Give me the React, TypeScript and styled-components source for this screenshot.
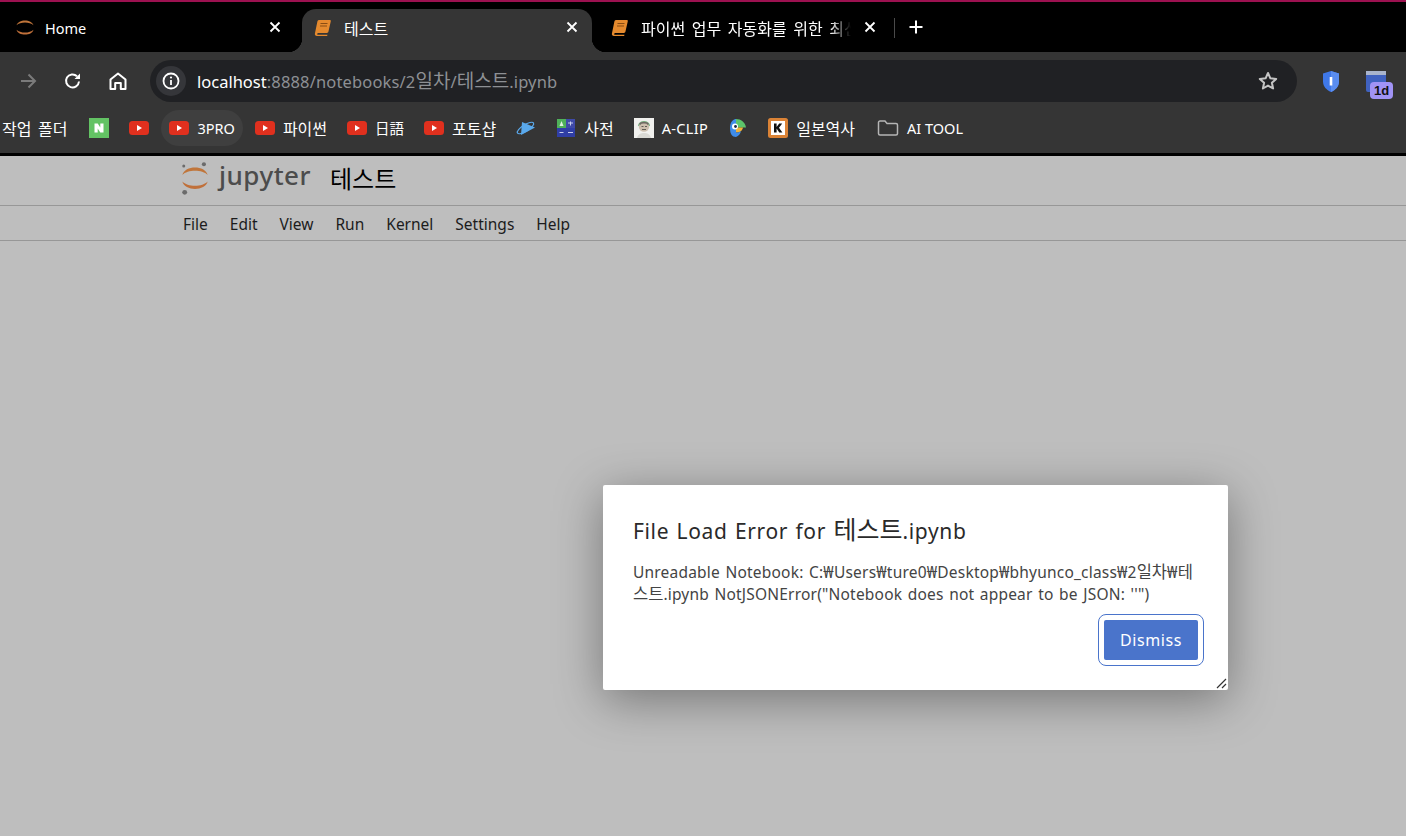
import styled, { createGlobalStyle } from 'styled-components';

const UI_FONT = '"Noto Sans", "Noto Sans CJK KR", sans-serif';

const GlobalStyle = createGlobalStyle`
  html, body {
    margin: 0;
    padding: 0;
    background: #bebebe;
  }
  body {
    font-family: ${UI_FONT};
    overflow: hidden;
  }
`;

const Screen = styled.div`
  position: relative;
  width: 1406px;
  height: 836px;
  overflow: hidden;
  background: #bebebe;
`;

// hangul runs a size larger than the latin text around them
const Ko = styled.span<{ $size?: number }>`
  font-family: "Noto Sans CJK KR", sans-serif;
  font-size: ${(p) => p.$size ?? 16}px;
  letter-spacing: 0;
`;

const TabStrip = styled.div`
  display: flex;
  align-items: flex-end;
  height: 50px;
  background: #000;
  border-top: 2px solid #9c1150;
`;

const Tab = styled.div<{ $active?: boolean; $width: number; $pad: number; $padRight: number }>`
  position: relative;
  display: flex;
  align-items: center;
  flex: none;
  box-sizing: border-box;
  width: ${(p) => p.$width}px;
  height: 43px;
  padding: 0 ${(p) => p.$padRight}px 6px ${(p) => p.$pad}px;
  color: #fff;
  font-size: 14.5px;
  background: ${(p) => (p.$active ? '#353535' : 'transparent')};
  border-radius: ${(p) => (p.$active ? '14px 14px 0 0' : '0')};

  ${(p) =>
    p.$active &&
    `
    &::before, &::after {
      content: '';
      position: absolute;
      bottom: 0;
      width: 14px;
      height: 14px;
    }
    &::before {
      left: -14px;
      background: radial-gradient(circle at 0 0, transparent 14px, #353535 14.5px);
    }
    &::after {
      right: -14px;
      background: radial-gradient(circle at 100% 0, transparent 14px, #353535 14.5px);
    }
  `}
`;

const TabIcon = styled.span`
  display: flex;
  flex: none;
  width: 20px;
  margin-right: 10px;
`;

const TabTitle = styled.span<{ $fade?: boolean }>`
  flex: 1;
  min-width: 0;
  overflow: hidden;
  white-space: nowrap;
  ${(p) =>
    p.$fade &&
    `
    margin-right: 11px;
    word-spacing: 3px;
    -webkit-mask-image: linear-gradient(to right, #000 90%, transparent 100%);
    mask-image: linear-gradient(to right, #000 90%, transparent 100%);
  `}
`;

const TabClose = styled.span`
  display: flex;
  flex: none;
  align-items: center;
  justify-content: center;
  width: 16px;
  height: 16px;
  margin-bottom: 2px;
`;

const TabDivider = styled.div`
  width: 1px;
  height: 20px;
  margin: 0 0 14px 10px;
  background: #4a4a4a;
`;

const NewTab = styled.div`
  display: flex;
  margin: 0 0 17px 13px;
`;

const Toolbar = styled.div`
  display: flex;
  align-items: center;
  height: 58px;
  padding: 0 2px 0 5px;
  box-sizing: border-box;
  background: #353535;
`;

const NavButton = styled.div`
  display: flex;
  flex: none;
  align-items: center;
  justify-content: center;
  width: 45px;
  height: 42px;
`;

const AddressBar = styled.div`
  display: flex;
  flex: 1;
  align-items: center;
  height: 42px;
  margin: 0 9px 0 10px;
  padding: 0 18px 0 6px;
  border-radius: 21px;
  background: #202124;
`;

const InfoBadge = styled.div`
  display: flex;
  flex: none;
  align-items: center;
  justify-content: center;
  width: 30px;
  height: 30px;
  margin-right: 11px;
  border-radius: 50%;
  background: #35363a;
`;

const Url = styled.div`
  flex: 1;
  padding-bottom: 4px;
  font-size: 16.5px;
  letter-spacing: 0.15px;
  color: #8d9094;
  white-space: nowrap;
`;

const UrlHost = styled.span`
  color: #fff;
  letter-spacing: 0;
`;

const ExtButton = styled.div`
  position: relative;
  display: flex;
  flex: none;
  align-items: center;
  justify-content: center;
  width: 49px;
  height: 42px;
`;

const ExtBadge = styled.div`
  position: absolute;
  top: 22px;
  left: 15px;
  width: 23px;
  height: 17px;
  border-radius: 4px;
  background: #a193f5;
  color: #111;
  font: 700 13px/17px "Liberation Sans", sans-serif;
  text-align: center;
`;

const BookmarkBar = styled.div`
  display: flex;
  align-items: center;
  gap: 4px;
  height: 46px;
  box-sizing: border-box;
  padding-bottom: 8px;
  background: #353535;
  border-bottom: 3px solid #000;
`;

const Bookmark = styled.div<{ $hover?: boolean; $plain?: boolean }>`
  display: flex;
  align-items: center;
  gap: 8px;
  flex: none;
  height: 36px;
  padding: 0 ${(p) => (p.$plain ? 10 : 8)}px 0 ${(p) => (p.$plain ? 2 : 8)}px;
  border-radius: 18px;
  font-size: 14.5px;
  word-spacing: 3px;
  color: #fff;
  white-space: nowrap;
  background: ${(p) => (p.$hover ? '#3f3f3f' : 'transparent')};
`;

const SpacedLabel = styled.span`
  letter-spacing: 0.35px;
`;

const ToolLabel = styled.span`
  word-spacing: 0;
`;

const HeaderRow = styled.div`
  display: flex;
  align-items: center;
  box-sizing: border-box;
  height: 50px;
  padding: 0 0 5px 180px;
  border-bottom: 1px solid #979797;
`;

const LogoWord = styled.span`
  position: relative;
  top: -3px;
  margin-left: 9px;
  font-family: "Noto Sans", sans-serif;
  font-size: 26px;
  font-weight: 500;
  line-height: 1;
  letter-spacing: 0.5px;
  color: #4c4c4c;
`;

const NotebookTitle = styled.span`
  margin: 0 0 2px 19px;
  font-size: 24px;
  color: #000;
`;

const MenuRow = styled.div`
  display: flex;
  align-items: center;
  gap: 22px;
  height: 35px;
  box-sizing: border-box;
  padding: 2px 0 0 183px;
  border-bottom: 1px solid #979797;
  font-size: 15.5px;
  color: #1c1c1c;
`;

const Dialog = styled.div`
  position: absolute;
  top: 485px;
  left: 603px;
  box-sizing: border-box;
  width: 625px;
  height: 205px;
  padding: 27px 24px 0 30px;
  border-radius: 2px;
  background: #fff;
  box-shadow: 0 10px 48px rgba(0, 0, 0, 0.38);
`;

const DialogTitle = styled.div`
  font-size: 21px;
  line-height: 32px;
  letter-spacing: 0.65px;
  word-spacing: 1.25px;
  color: #2a2a2a;
`;

const DialogBody = styled.div`
  margin-top: 14px;
  font-size: 15.5px;
  line-height: 21px;
  letter-spacing: 0.2px;
  word-spacing: 1.3px;
  color: #444;
  white-space: nowrap;
`;

const DialogActions = styled.div`
  display: flex;
  justify-content: flex-end;
  margin-top: 9px;
`;

const FocusRing = styled.div`
  padding: 5px;
  border: 1px solid #4a74cb;
  border-radius: 8px;
`;

const DismissButton = styled.button`
  display: block;
  width: 94px;
  height: 40px;
  padding: 0;
  border: none;
  border-radius: 2px;
  background: #4a74cb;
  color: #fff;
  font-family: ${UI_FONT};
  font-size: 16px;
  letter-spacing: 0.6px;
`;

const ResizeGrip = styled.svg`
  position: absolute;
  right: 1px;
  bottom: 1px;
`;

const CloseIcon = () => (
  <svg width="12" height="12" viewBox="0 0 12 12">
    <path d="M1.5 1.5l9 9M10.5 1.5l-9 9" stroke="#fff" strokeWidth="1.8" />
  </svg>
);

const NotebookIcon = () => (
  <svg width="18" height="18" viewBox="0 0 18 18">
    <path
      d="M5.2 1h10.6c.7 0 1.1.6 1 1.2l-2.4 10.6c-.2.7-.7 1.2-1.4 1.2H4.5c-.8 0-1.2.5-1.3 1-.1.4.2.8.8.8h9.4l-.2 1.2H3c-1.5 0-2.4-1-2.1-2.4L3.4 2.4C3.6 1.6 4.4 1 5.2 1z"
      fill="#e58a2e"
    />
    <path d="M6.5 4.5h7M6 7h7" stroke="#8a4c12" strokeWidth="1" />
  </svg>
);

const JupyterMark = ({ size, dots }: { size: number; dots?: boolean }) => (
  <svg width={size} height={size * 1.15} viewBox="0 0 32 36">
    <path d="M2.5 14.5C5 4 27 4 29.5 14.5C24 8.5 8 8.5 2.5 14.5Z" fill="#c0753a" />
    <path d="M2.5 21.5C5 32 27 32 29.5 21.5C24 27.5 8 27.5 2.5 21.5Z" fill="#c0703a" />
    {dots && (
      <>
        <circle cx="25.5" cy="3" r="2.2" fill="#6b6b6b" />
        <circle cx="4" cy="5" r="1.6" fill="#6b6b6b" />
        <circle cx="5" cy="33" r="2.6" fill="#6b6b6b" />
      </>
    )}
  </svg>
);

const YoutubeIcon = () => (
  <svg width="20" height="14" viewBox="0 0 20 14">
    <rect width="20" height="14" rx="3.5" fill="#e0301e" />
    <path d="M8 4l5 3-5 3z" fill="#fff" />
  </svg>
);

const NaverIcon = () => (
  <svg width="20" height="20" viewBox="0 0 20 20">
    <rect width="20" height="20" fill="#63c364" />
    <path d="M5.5 5.5h3.2l2.6 3.9V5.5h3.2v9h-3.2L8.7 10.6v3.9H5.5z" fill="#fff" />
  </svg>
);

const OrbitIcon = () => (
  <svg width="20" height="20" viewBox="0 0 20 20">
    <path d="M6 4l13 5.5L5 17z" fill="#5aa9ec" />
    <ellipse
      cx="9.5"
      cy="10"
      rx="9.5"
      ry="3.2"
      transform="rotate(-32 9.5 10)"
      stroke="#5aa9ec"
      strokeWidth="1.2"
      fill="none"
    />
  </svg>
);

const DictIcon = () => (
  <svg width="20" height="20" viewBox="-1 -1 20 20">
    <rect x="0" y="0" width="9" height="9" fill="#4fb05a" />
    <rect x="9" y="0" width="9" height="9" fill="#3f4aa8" />
    <rect x="0" y="9" width="18" height="9" fill="#2f3ea6" />
    <path d="M4.5 2l2 5h-4z" fill="#dff2e0" />
    <path d="M11 4h5M13.5 2.5v4M2.5 13.5h4M11 13.5h5" stroke="#c9cfee" strokeWidth="1" />
  </svg>
);

const AvatarIcon = () => (
  <svg width="20" height="20" viewBox="0 0 20 20">
    <rect width="20" height="20" fill="#f1f1ee" />
    <circle cx="10" cy="8.5" r="5.2" fill="#cdbfae" />
    <path d="M4.5 8C4.5 2 15.5 2 15.5 8" stroke="#7fb98a" strokeWidth="1.2" fill="none" />
    <path d="M5.5 6.5C7 4 13 4 14.5 6.5" stroke="#6f6a64" strokeWidth="1.6" fill="none" />
    <path d="M7.5 8.5h2M11 8.5h2M8 11.5h4" stroke="#57524c" strokeWidth="0.9" />
    <path d="M3 20c1-4 4-5 7-5s6 1 7 5z" fill="#d9d9d4" />
  </svg>
);

const ParrotIcon = () => (
  <svg width="20" height="20" viewBox="0 0 20 20">
    <path d="M2 10C2 3 6 1 8 1v18C4 19 2 16 2 10z" fill="#3f8ce8" />
    <path d="M8 1c5 0 9 3 10 8.5H8z" fill="#5cc46a" />
    <path d="M8 9.5h7c-.5 3-3 5-7 5z" fill="#f0b23a" />
    <path d="M8 14.5c2 0 4-.5 5-1.5-.5 3-2.5 5-5 6z" fill="#3f8ce8" />
    <circle cx="7" cy="8.5" r="3" fill="#fff" />
    <circle cx="7.5" cy="8.5" r="1.4" fill="#1c2a44" />
  </svg>
);

const KlookIcon = () => (
  <svg width="20" height="20" viewBox="0 0 20 20">
    <rect width="20" height="20" rx="2.5" fill="#db8336" />
    <rect x="3" y="3" width="14" height="14" fill="#fff" />
    <path d="M6 5.5h2.6v3.4l2.6-3.4h3l-3.2 4.2 3.4 4.8h-3.1l-2.7-4v4H6z" fill="#111" />
  </svg>
);

const FolderIcon = () => (
  <svg width="24" height="18" viewBox="-2 0 24 18">
    <path
      d="M1.5 3.5c0-.8.6-1.5 1.5-1.5h5l2 2.5h9c.8 0 1.5.7 1.5 1.5v8.5c0 .8-.7 1.5-1.5 1.5H3c-.9 0-1.5-.7-1.5-1.5z"
      fill="none"
      stroke="#b5b5b5"
      strokeWidth="1.5"
    />
  </svg>
);

const bookmarks = [
  { key: 'naver', icon: <NaverIcon /> },
  { key: 'yt', icon: <YoutubeIcon /> },
  { key: '3pro', icon: <YoutubeIcon />, label: '3PRO', hover: true },
  { key: 'py', icon: <YoutubeIcon />, label: <Ko>파이썬</Ko> },
  { key: 'jp', icon: <YoutubeIcon />, label: '日語' },
  { key: 'ps', icon: <YoutubeIcon />, label: <Ko>포토샵</Ko> },
  { key: 'orbit', icon: <OrbitIcon /> },
  { key: 'dict', icon: <DictIcon />, label: <Ko>사전</Ko> },
  { key: 'clip', icon: <AvatarIcon />, label: <SpacedLabel>A-CLIP</SpacedLabel> },
  { key: 'parrot', icon: <ParrotIcon /> },
  { key: 'k', icon: <KlookIcon />, label: <Ko>일본역사</Ko> },
  { key: 'folder', icon: <FolderIcon />, label: <ToolLabel>AI TOOL</ToolLabel> },
];

const menuItems = ['File', 'Edit', 'View', 'Run', 'Kernel', 'Settings', 'Help'];

export default function App() {
  return (
    <Screen>
      <GlobalStyle />
      <TabStrip>
        <Tab $width={302} $pad={15} $padRight={19}>
          <TabIcon>
            <JupyterMark size={20} />
          </TabIcon>
          <TabTitle>Home</TabTitle>
          <TabClose>
            <CloseIcon />
          </TabClose>
        </Tab>
        <Tab $active $width={290} $pad={12} $padRight={12}>
          <TabIcon>
            <NotebookIcon />
          </TabIcon>
          <TabTitle>
            <Ko>테스트</Ko>
          </TabTitle>
          <TabClose>
            <CloseIcon />
          </TabClose>
        </Tab>
        <Tab $width={292} $pad={19} $padRight={6}>
          <TabIcon>
            <NotebookIcon />
          </TabIcon>
          <TabTitle $fade>
            <Ko>파이썬 업무 자동화를 위한 최신</Ko>
          </TabTitle>
          <TabClose>
            <CloseIcon />
          </TabClose>
        </Tab>
        <TabDivider />
        <NewTab>
          <svg width="16" height="16" viewBox="0 0 16 16">
            <path d="M8 1.5v13M1.5 8h13" stroke="#fff" strokeWidth="2" />
          </svg>
        </NewTab>
      </TabStrip>

      <Toolbar>
        <NavButton>
          <svg width="20" height="20" viewBox="0 0 20 20" fill="none">
            <path d="M3 10h14M10.5 3.5L17 10l-6.5 6.5" stroke="#7b7b7b" strokeWidth="2" />
          </svg>
        </NavButton>
        <NavButton>
          <svg width="20" height="20" viewBox="0 0 20 20" fill="none">
            <path d="M16 10.5A6.5 6.5 0 1 1 14 5.2" stroke="#fff" strokeWidth="2" />
            <path d="M17 2.5V8h-5.5z" fill="#fff" />
          </svg>
        </NavButton>
        <NavButton>
          <svg width="20" height="20" viewBox="0 0 20 20" fill="none">
            <path
              d="M2.5 18V8.5L10 2.5l7.5 6V18h-4.7v-6H7.2v6z"
              stroke="#fff"
              strokeWidth="2"
              strokeLinejoin="round"
            />
          </svg>
        </NavButton>
        <AddressBar>
          <InfoBadge>
            <svg width="18" height="18" viewBox="0 0 18 18" fill="none">
              <circle cx="9" cy="9" r="7.5" stroke="#fff" strokeWidth="1.8" />
              <path d="M9 8v5" stroke="#fff" strokeWidth="1.8" />
              <circle cx="9" cy="5.5" r="1.1" fill="#fff" />
            </svg>
          </InfoBadge>
          <Url>
            <UrlHost>localhost</UrlHost>:8888/notebooks/2<Ko $size={19}>일차</Ko>/<Ko $size={19}>테스트</Ko>.ipynb
          </Url>
          <svg width="22" height="22" viewBox="0 0 22 22" fill="none">
            <path
              d="M11 3l2.4 5.3 5.8.6-4.3 3.9 1.2 5.7L11 15.6l-5.1 2.9 1.2-5.7-4.3-3.9 5.8-.6z"
              stroke="#c4c4c4"
              strokeWidth="2"
              strokeLinejoin="round"
            />
          </svg>
        </AddressBar>
        <ExtButton>
          <svg width="18" height="21" viewBox="0 0 18 21">
            <path d="M9 0l8 2.5v8c0 5-3.5 8.5-8 10.5-4.5-2-8-5.5-8-10.5v-8z" fill="#3f78e8" />
            <path d="M9 0l8 2.5v8c0 5-3.5 8.5-8 10.5z" fill="#5a8df0" />
            <rect x="7.7" y="6" width="2.6" height="8.5" fill="#fff" />
          </svg>
        </ExtButton>
        <ExtButton>
          <svg width="20" height="21" viewBox="0 0 20 21" style={{ marginLeft: -8 }}>
            <rect y="0" width="20" height="21" rx="2" fill="#4062c0" />
            <rect y="0" width="20" height="4" fill="#a9b4cc" />
          </svg>
          <ExtBadge>1d</ExtBadge>
        </ExtButton>
      </Toolbar>

      <BookmarkBar>
        <Bookmark $plain>
          <Ko>작업 폴더</Ko>
        </Bookmark>
        {bookmarks.map((b) => (
          <Bookmark key={b.key} $hover={b.hover}>
            {b.icon}
            {b.label}
          </Bookmark>
        ))}
      </BookmarkBar>

      <HeaderRow>
        <JupyterMark size={30} dots />
        <LogoWord>jupyter</LogoWord>
        <NotebookTitle>테스트</NotebookTitle>
      </HeaderRow>
      <MenuRow>
        {menuItems.map((item) => (
          <span key={item}>{item}</span>
        ))}
      </MenuRow>

      <Dialog>
        <DialogTitle>
          File Load Error for <Ko $size={25}>테스트</Ko>.ipynb
        </DialogTitle>
        <DialogBody>
          Unreadable Notebook: C:₩Users₩ture0₩Desktop₩bhyunco_class₩2<Ko $size={16.5}>일차</Ko>₩<Ko $size={16.5}>테</Ko>
          <br />
          <Ko $size={16.5}>스트</Ko>.ipynb NotJSONError("Notebook does not appear to be JSON: ''")
        </DialogBody>
        <DialogActions>
          <FocusRing>
            <DismissButton>Dismiss</DismissButton>
          </FocusRing>
        </DialogActions>
        <ResizeGrip width="12" height="12" viewBox="0 0 12 12">
          <path d="M2 11l9-9M7 11l4-4" stroke="#333" strokeWidth="1.2" />
        </ResizeGrip>
      </Dialog>
    </Screen>
  );
}
